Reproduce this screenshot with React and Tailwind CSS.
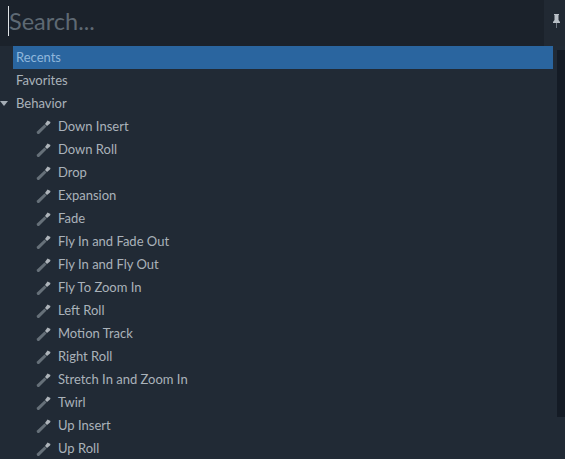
import React from "react";

const ITEMS = [
  "Down Insert",
  "Down Roll",
  "Drop",
  "Expansion",
  "Fade",
  "Fly In and Fade Out",
  "Fly In and Fly Out",
  "Fly To Zoom In",
  "Left Roll",
  "Motion Track",
  "Right Roll",
  "Stretch In and Zoom In",
  "Twirl",
  "Up Insert",
  "Up Roll",
];

const Wand = () => (
  <svg width="16" height="16" viewBox="0 0 16 16" className="shrink-0">
    <path d="M1.5 15 L0.5 13 L8.5 5.5 L10.5 7.5 L3 15 Z" fill="#667079" />
    <path d="M9 5 L11.5 1.5 L14.5 3 L14 4.5 L11 7 Z" fill="#aeb4ba" />
  </svg>
);

const Pin = () => (
  <svg width="9" height="16" viewBox="0 0 9 16">
    <path d="M2 1 H7 V2 H6.5 V7 L8 9 V10 H1 V9 L2.5 7 V2 H2 Z" fill="#b9c0c7" />
    <path d="M4 10 H5 V15 H4 Z" fill="#6f7882" />
  </svg>
);

export default function App() {
  return (
    <div className="w-[565px] h-[459px] overflow-hidden flex flex-col bg-[#212a35] text-[13px] text-[#aab2ba] font-['Lato','Open_Sans',sans-serif]">
      {/* Search bar */}
      <div className="h-[46px] shrink-0 flex bg-[#1b222b]">
        <div className="flex-1 flex items-center pl-2">
          <div className="w-px h-[30px] bg-[#dfe3e6] -mt-[5px]" />
          <span className="text-[23.5px] leading-[30px] text-[#5e6973] -mt-[5px]">Search...</span>
        </div>
        <div className="w-[21px] flex items-center justify-end pr-1 pb-[4px] bg-[#212933]">
          <Pin />
        </div>
      </div>

      <div className="flex flex-1 min-h-0">
        {/* Tree */}
        <div className="flex-1 min-w-0 pr-[4px] pl-[13px]">
          <div className="h-[23px] flex items-center pl-[3px] bg-[#2a659f] text-[#8fb7dc]">Recents</div>
          <div className="h-[23px] flex items-center pl-[3px]">Favorites</div>
          <div className="h-[23px] flex items-center pl-[3px] relative">
            <span className="absolute left-[-13px] top-[9px] w-0 h-0 border-x-[4px] border-x-transparent border-t-[5px] border-t-[#a5adb5]" />
            Behavior
          </div>
          {ITEMS.map((item) => (
            <div key={item} className="h-[23px] flex items-center gap-[6px] pl-[23px] whitespace-nowrap">
              <Wand />
              <span>{item}</span>
            </div>
          ))}
        </div>

        {/* Scrollbar */}
        <div className="w-[8px] shrink-0 pt-[4px]">
          <div className="h-[367px] bg-[#141b25]" />
        </div>
      </div>
    </div>
  );
}
